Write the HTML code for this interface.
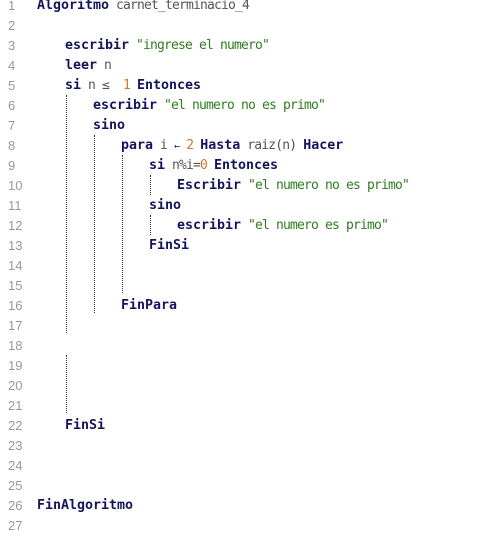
<!DOCTYPE html>
<html><head><meta charset="utf-8"><style>
html,body{margin:0;padding:0;background:#fff;width:502px;height:536px;overflow:hidden}
body{position:relative;font-family:"DejaVu Sans Mono","Liberation Mono",monospace;font-size:13px;letter-spacing:-0.83px}
.w{position:absolute;left:0;top:1px;width:502px;height:536px}
.l{position:absolute;left:0;height:20px;line-height:20px;white-space:pre;color:#555}
.n{position:absolute;left:8px;color:#999;font-family:"Liberation Sans",sans-serif;font-size:13px;letter-spacing:0}
.c{position:absolute;left:37px}
.k{color:#14145e;font-weight:bold;font-size:13.3px;letter-spacing:0}
.s{color:#2e7d1e}
.d{color:#d0782e}
.g{position:absolute;width:0;border-left:1px dotted #333}
</style></head><body><div class="w">
<div class="l" style="top:-5px"><span class="n">1</span><span class="c"><span class="k">Algoritmo</span> carnet_terminacio_4</span></div>
<div class="l" style="top:15px"><span class="n">2</span></div>
<div class="l" style="top:35px"><span class="n">3</span><span class="c" style="left:65px"><span class="k">escribir</span> <span class="s">"ingrese el numero"</span></span></div>
<div class="l" style="top:55px"><span class="n">4</span><span class="c" style="left:65px"><span class="k">leer</span> n</span></div>
<div class="l" style="top:75px"><span class="n">5</span><span class="c" style="left:65px"><span class="k">si</span> n ≤  <span class="d">1</span> <span class="k">Entonces</span></span></div>
<div class="l" style="top:95px"><span class="n">6</span><span class="c" style="left:93px"><span class="k">escribir</span> <span class="s">"el numero no es primo"</span></span></div>
<div class="l" style="top:115px"><span class="n">7</span><span class="c" style="left:93px"><span class="k">sino</span></span></div>
<div class="l" style="top:135px"><span class="n">8</span><span class="c" style="left:121px"><span class="k">para</span> i <span style="color:#14145e;font-size:10px">←</span> <span class="d">2</span> <span class="k">Hasta</span> raiz(n) <span class="k">Hacer</span></span></div>
<div class="l" style="top:155px"><span class="n">9</span><span class="c" style="left:149px"><span class="k">si</span> n%i=<span class="d">0</span> <span class="k">Entonces</span></span></div>
<div class="l" style="top:175px"><span class="n">10</span><span class="c" style="left:177px"><span class="k">Escribir</span> <span class="s">"el numero no es primo"</span></span></div>
<div class="l" style="top:195px"><span class="n">11</span><span class="c" style="left:149px"><span class="k">sino</span></span></div>
<div class="l" style="top:215px"><span class="n">12</span><span class="c" style="left:177px"><span class="k">escribir</span> <span class="s">"el numero es primo"</span></span></div>
<div class="l" style="top:235px"><span class="n">13</span><span class="c" style="left:149px"><span class="k">FinSi</span></span></div>
<div class="l" style="top:255px"><span class="n">14</span></div>
<div class="l" style="top:275px"><span class="n">15</span></div>
<div class="l" style="top:295px"><span class="n">16</span><span class="c" style="left:121px"><span class="k">FinPara</span></span></div>
<div class="l" style="top:315px"><span class="n">17</span></div>
<div class="l" style="top:335px"><span class="n">18</span></div>
<div class="l" style="top:355px"><span class="n">19</span></div>
<div class="l" style="top:375px"><span class="n">20</span></div>
<div class="l" style="top:395px"><span class="n">21</span></div>
<div class="l" style="top:415px"><span class="n">22</span><span class="c" style="left:65px"><span class="k">FinSi</span></span></div>
<div class="l" style="top:435px"><span class="n">23</span></div>
<div class="l" style="top:455px"><span class="n">24</span></div>
<div class="l" style="top:475px"><span class="n">25</span></div>
<div class="l" style="top:495px"><span class="n">26</span><span class="c"><span class="k">FinAlgoritmo</span></span></div>
<div class="l" style="top:515px"><span class="n">27</span></div>
</div>
<div class="g" style="left:66px;top:95px;height:238px"></div>
<div class="g" style="left:66px;top:355px;height:58px"></div>
<div class="g" style="left:94px;top:135px;height:178px"></div>
<div class="g" style="left:122px;top:155px;height:138px"></div>
<div class="g" style="left:150px;top:175px;height:20px"></div>
<div class="g" style="left:150px;top:215px;height:20px"></div>
</body></html>
